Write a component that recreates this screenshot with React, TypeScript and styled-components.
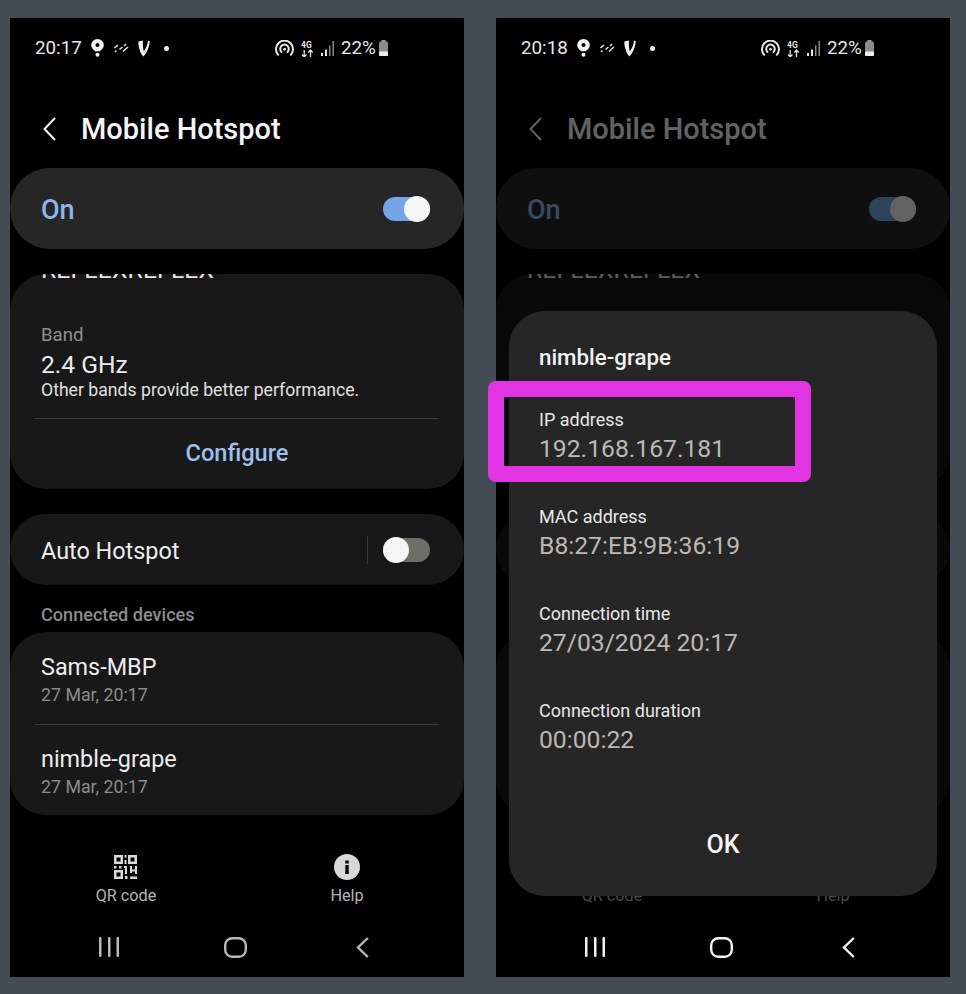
import React from "react"
import styled, { createGlobalStyle } from "styled-components"

const GlobalStyle = createGlobalStyle`
  html, body {
    margin: 0;
    padding: 0;
    background: #434c54;
  }
  * {
    box-sizing: border-box;
  }
`

const Page = styled.div`
  width: 966px;
  height: 994px;
  padding: 18px 16px 17px 10px;
  display: flex;
  gap: 32px;
  background: #434c54;
  font-family: Roboto, "Liberation Sans", sans-serif;
`

const PhoneFrame = styled.div`
  position: relative;
  width: 454px;
  height: 959px;
  background: #000;
  display: flex;
  flex-direction: column;
`

const StatusBar = styled.div`
  height: 60px;
  padding-left: 25px;
  display: flex;
  align-items: center;
  color: #e8e8e8;
  font-size: 18.8px;
`

const StatusLeft = styled.div`
  width: 240px;
  display: flex;
  align-items: center;
  gap: 9.5px;
`

const StatusRight = styled.div`
  display: flex;
  align-items: center;
  gap: 7px;
`

const Percent = styled.span`
  margin-right: -4px;
`

const Dot = styled.div`
  width: 5px;
  height: 5px;
  margin-left: 4px;
  border-radius: 50%;
  background: #f0f0f0;
`

const Screen = styled.div<{ $dimmed?: boolean }>`
  flex: 1;
  display: flex;
  flex-direction: column;
  opacity: ${(p) => (p.$dimmed ? 0.4 : 1)};
`

const Header = styled.div`
  height: 90px;
  padding: 12px 0 0 33px;
  display: flex;
  align-items: center;
  gap: 25px;
  color: #f4f4f4;
`

const Title = styled.h1`
  margin: 0;
  font-size: 29px;
  font-weight: 500;
  color: #f4f4f4;
`

const SwitchCard = styled.div`
  height: 81px;
  padding: 0 34px 0 31px;
  border-radius: 40px;
  background: #262626;
  display: flex;
  align-items: center;
  justify-content: space-between;
`

const OnLabel = styled.span`
  padding-top: 2px;
  font-size: 27px;
  font-weight: 500;
  color: #8eb6ea;
`

const Track = styled.div<{ $on?: boolean }>`
  position: relative;
  width: 47px;
  height: 24px;
  border-radius: 12px;
  background: ${(p) => (p.$on ? "#76a5e6" : "#6e6e68")};
`

const Knob = styled.div<{ $on?: boolean }>`
  position: absolute;
  top: -1px;
  ${(p) => (p.$on ? "right: 0;" : "left: 0;")}
  width: 26px;
  height: 26px;
  border-radius: 50%;
  background: #f6f6f6;
`

const List = styled.div`
  flex: 1;
  margin-top: 25px;
  display: flex;
  flex-direction: column;
  gap: 25px;
  overflow: hidden;
`

const Card = styled.div<{ $height: number }>`
  height: ${(p) => p.$height}px;
  border-radius: 36px;
  background: #181818;
  overflow: hidden;
  flex: none;
`

const ClippedName = styled.div`
  margin: -15px 0 0 31px;
  height: 21px;
  font-size: 24.6px;
  line-height: 22px;
  letter-spacing: 0.2px;
  color: #e6e6e6;
`

const BandBlock = styled.div`
  height: 138px;
  padding: 43px 31px 0;
`

const SmallLabel = styled.div`
  font-size: 18.6px;
  line-height: 24px;
  color: #8f8f8f;
`

const BandValue = styled.div`
  margin-top: 4px;
  font-size: 24.6px;
  line-height: 28px;
  color: #ededed;
`

const BandNote = styled.div`
  font-size: 17.65px;
  line-height: 22px;
  color: #e0e0e0;
`

const Divider = styled.div`
  height: 1px;
  margin: 0 25px;
  background: #3a3a3a;
`

const ConfigureRow = styled.div`
  height: 70px;
  padding-bottom: 2px;
  display: flex;
  align-items: center;
  justify-content: center;
  font-size: 23.6px;
  font-weight: 500;
  color: #9dc0ee;
`

const AutoRow = styled.div`
  height: 100%;
  padding: 0 34px 0 31px;
  display: flex;
  align-items: center;
  font-size: 23.4px;
  color: #ededed;
`

const AutoLabel = styled.span`
  flex: 1;
  padding-top: 2px;
`

const VBar = styled.div`
  width: 1px;
  height: 28px;
  margin-right: 15px;
  background: #3a3a3a;
`

const SectionLabel = styled.div`
  margin: -7px 0 -20px 31px;
  font-size: 18.1px;
  line-height: 24px;
  font-weight: 500;
  color: #8c8c8c;
`

const DeviceRow = styled.div<{ $top: number }>`
  height: 92px;
  padding: ${(p) => p.$top}px 31px 0;
`

const DeviceName = styled.div`
  font-size: 23.4px;
  line-height: 32px;
  color: #ededed;
`

const DeviceDate = styled.div`
  font-size: 17.8px;
  line-height: 24px;
  color: #8c8c8c;
`

const BottomActions = styled.div`
  height: 65px;
  margin-top: 39px;
  display: flex;
`

const Action = styled.div<{ $width: number }>`
  width: ${(p) => p.$width}px;
  display: flex;
  flex-direction: column;
  align-items: center;
  gap: 6px;
  font-size: 16.2px;
  line-height: 20px;
  color: #b4b4b4;
`

const ActionIcon = styled.div`
  height: 26px;
  display: flex;
  align-items: center;
`

const NavBar = styled.div<{ $color: string }>`
  height: 58px;
  padding-bottom: 2px;
  display: flex;
  align-items: center;
  color: ${(p) => p.$color};
`

const NavSlot = styled.div<{ $width: number }>`
  width: ${(p) => p.$width}px;
  display: flex;
  justify-content: center;
`

const Dialog = styled.div`
  position: absolute;
  left: 13px;
  top: 293px;
  width: 428px;
  height: 585px;
  padding: 31px 30px 0;
  border-radius: 36px;
  background: #262626;
  display: flex;
  flex-direction: column;
`

const DialogTitle = styled.div`
  flex: none;
  margin-bottom: 36px;
  font-size: 22.3px;
  line-height: 30px;
  font-weight: 500;
  color: #f2f2f2;
`

const InfoBlock = styled.div`
  flex: none;
  height: 97px;
`

const InfoLabel = styled.div`
  font-size: 18px;
  line-height: 24px;
  color: #e8e8e8;
`

const InfoValue = styled.div`
  font-size: 24.7px;
  line-height: 34px;
  color: #bdb9b2;
`

const OkButton = styled.div`
  flex: none;
  margin-top: -4px;
  height: 104px;
  display: flex;
  align-items: center;
  justify-content: center;
  font-size: 25px;
  font-weight: 500;
  color: #f4f4f4;
`

const Highlight = styled.div`
  position: absolute;
  left: -8px;
  top: 363px;
  width: 323px;
  height: 101px;
  border: 16px solid #e135e3;
  border-radius: 8px;
  pointer-events: none;
`

const BackIcon = () => (
  <svg width="13" height="24" viewBox="0 0 13 24" fill="none" stroke="currentColor" strokeWidth="2">
    <path d="M12 1 1.500 12 12 23" />
  </svg>
)

const LocationIcon = () => (
  <svg width="13" height="18" viewBox="0 0 13 18" fill="#f2f2f2">
    <path d="M6.500 0a6.300 6.300 0 0 1 6.300 6.300c0 2.900-2.800 4.900-4 5.900H4.200C3 11.200.2 9.200.2 6.300A6.300 6.300 0 0 1 6.500 0Z" />
    <circle cx="6.500" cy="6" r="2" fill="#000" />
    <circle cx="6.500" cy="15.800" r="2" />
  </svg>
)

const WavesIcon = () => (
  <svg width="15" height="10" viewBox="0 0 15 10" fill="none" stroke="#dcdcdc" strokeWidth="1.600">
    <path d="M0.500 5 4 2M1 9l1.500-1.300M5.500 6.500 8.500 4M10 3l2-1.800M9 8.500l5-4.500" />
  </svg>
)

const VIcon = () => (
  <svg width="12" height="17" viewBox="0 0 12 17" fill="#f0f0f0">
    <path d="M0.300 1.500 5 0.500C4.700 5 5 9 5.900 11.500 8 8.500 9.500 5 10 0.800L11.800 1C11.400 7 8.800 13 5.500 16.500 2.300 13.500 0.300 7 0.300 1.500Z" />
  </svg>
)

const HotspotIcon = () => (
  <svg width="19" height="16" viewBox="0 0 19 16" fill="none" stroke="#e8e8e8" strokeWidth="2" strokeLinecap="round">
    <path d="M3.200 14.800a8.500 8.500 0 1 1 12.600 0" />
    <path d="M6.500 12a4.300 4.300 0 1 1 6 0" />
    <circle cx="9.500" cy="9.300" r="1.400" fill="#e8e8e8" stroke="none" />
  </svg>
)

const NetworkIcon = () => (
  <svg width="13" height="17" viewBox="0 0 13 17" fill="none" stroke="#e0e0e0" strokeWidth="1.300">
    <text x="0" y="7.500" fontSize="8.500" fontWeight="700" fontFamily="Roboto, sans-serif" fill="#e0e0e0" stroke="none">
      4G
    </text>
    <path d="M3.200 10v7M1 14.500 3.200 17l2.200-2.500M9.500 17v-7M7.300 12.500 9.500 10l2.200 2.500" />
  </svg>
)

const SignalIcon = () => (
  <svg width="13" height="15" viewBox="0 0 13 15" fill="#8a8a8a">
    <rect x="0" y="12" width="2" height="3" fill="#e6e6e6" />
    <rect x="4" y="8.500" width="2" height="6.500" fill="#e6e6e6" />
    <rect x="8" y="4.500" width="1.500" height="10.500" />
    <rect x="11.500" y="0" width="1.500" height="15" />
  </svg>
)

const BatteryIcon = () => (
  <svg width="9" height="16" viewBox="0 0 9 16">
    <rect x="2.500" y="0" width="4" height="2" fill="#9a9a9a" />
    <rect x="0" y="1.500" width="9" height="14.500" rx="1.500" fill="#8c8c8c" />
    <rect x="0" y="11.500" width="9" height="4.500" rx="1" fill="#ececec" />
  </svg>
)

const QrIcon = () => (
  <svg width="24" height="24" viewBox="0 0 24 24" fill="#d8d8d8">
    <path fillRule="evenodd" d="M0 0h9v9H0ZM2.500 2.500v4h4v-4ZM14 0h9v9h-9ZM16.500 2.500v4h4v-4ZM0 15h9v9H0ZM2.500 17.500v4h4v-4Z" />
    <rect x="10.500" y="0" width="2" height="2.500" />
    <rect x="10.500" y="5" width="2" height="4" />
    <rect x="0" y="11" width="2.500" height="2.500" />
    <rect x="5" y="11" width="2.500" height="2.500" />
    <rect x="10" y="11" width="2.500" height="2" />
    <rect x="11" y="11" width="2" height="8" />
    <rect x="16" y="11" width="2" height="7" />
    <rect x="21" y="11" width="2" height="8" />
    <rect x="16" y="14.500" width="7" height="2" />
    <rect x="11" y="21" width="2.500" height="3" />
    <rect x="16" y="21.500" width="7" height="2.500" />
  </svg>
)

const InfoIcon = () => (
  <svg width="26" height="26" viewBox="0 0 26 26">
    <circle cx="13" cy="13" r="13" fill="#d8d8d8" />
    <rect x="11.300" y="11" width="3.400" height="9" fill="#000" />
    <rect x="11.300" y="6.500" width="3.400" height="3" fill="#000" />
  </svg>
)

const RecentIcon = () => (
  <svg width="20" height="20" viewBox="0 0 20 20" fill="currentColor">
    <rect x="0" y="0" width="2.500" height="20" rx="1" />
    <rect x="9" y="0" width="2.500" height="20" rx="1" />
    <rect x="17.500" y="0" width="2.500" height="20" rx="1" />
  </svg>
)

const HomeIcon = () => (
  <svg width="23" height="21" viewBox="0 0 23 21" fill="none" stroke="currentColor" strokeWidth="2.400">
    <rect x="1.200" y="1.200" width="20.600" height="18.600" rx="7" />
  </svg>
)

const NavBackIcon = () => (
  <svg width="13" height="21" viewBox="0 0 13 21" fill="none" stroke="currentColor" strokeWidth="2.400">
    <path d="M11.800 1 2 10.500 11.800 20" />
  </svg>
)

const HotspotScreen = ({ dimmed }: { dimmed?: boolean }) => (
  <Screen $dimmed={dimmed}>
    <Header>
      <BackIcon />
      <Title>Mobile Hotspot</Title>
    </Header>
    <SwitchCard>
      <OnLabel>On</OnLabel>
      <Track $on>
        <Knob $on />
      </Track>
    </SwitchCard>
    <List>
      <Card $height={215}>
        <ClippedName>REFLEXREFLEX</ClippedName>
        <BandBlock>
          <SmallLabel>Band</SmallLabel>
          <BandValue>2.4 GHz</BandValue>
          <BandNote>Other bands provide better performance.</BandNote>
        </BandBlock>
        <Divider />
        <ConfigureRow>Configure</ConfigureRow>
      </Card>
      <Card $height={71}>
        <AutoRow>
          <AutoLabel>Auto Hotspot</AutoLabel>
          <VBar />
          <Track>
            <Knob />
          </Track>
        </AutoRow>
      </Card>
      <SectionLabel>Connected devices</SectionLabel>
      <Card $height={183}>
        <DeviceRow $top={19}>
          <DeviceName>Sams-MBP</DeviceName>
          <DeviceDate>27 Mar, 20:17</DeviceDate>
        </DeviceRow>
        <Divider />
        <DeviceRow $top={18}>
          <DeviceName>nimble-grape</DeviceName>
          <DeviceDate>27 Mar, 20:17</DeviceDate>
        </DeviceRow>
      </Card>
    </List>
    <BottomActions>
      <Action $width={232}>
        <ActionIcon>
          <QrIcon />
        </ActionIcon>
        QR code
      </Action>
      <Action $width={210}>
        <ActionIcon>
          <InfoIcon />
        </ActionIcon>
        Help
      </Action>
    </BottomActions>
  </Screen>
)

const Phone = ({ time, navColor, children }: { time: string; navColor: string; children: React.ReactNode }) => (
  <PhoneFrame>
    <StatusBar>
      <StatusLeft>
        {time}
        <LocationIcon />
        <WavesIcon />
        <VIcon />
        <Dot />
      </StatusLeft>
      <StatusRight>
        <HotspotIcon />
        <NetworkIcon />
        <SignalIcon />
        <Percent>22%</Percent>
        <BatteryIcon />
      </StatusRight>
    </StatusBar>
    {children}
    <NavBar $color={navColor}>
      <NavSlot $width={198}>
        <RecentIcon />
      </NavSlot>
      <NavSlot $width={54}>
        <HomeIcon />
      </NavSlot>
      <NavSlot $width={200}>
        <NavBackIcon />
      </NavSlot>
    </NavBar>
  </PhoneFrame>
)

const infoRows = [
  { label: "IP address", value: "192.168.167.181" },
  { label: "MAC address", value: "B8:27:EB:9B:36:19" },
  { label: "Connection time", value: "27/03/2024 20:17" },
  { label: "Connection duration", value: "00:00:22" },
]

export default function App() {
  return (
    <Page>
      <GlobalStyle />
      <Phone time="20:17" navColor="#b8b8b8">
        <HotspotScreen />
      </Phone>
      <Phone time="20:18" navColor="#f4f4f4">
        <HotspotScreen dimmed />
        <Dialog>
          <DialogTitle>nimble-grape</DialogTitle>
          {infoRows.map((row) => (
            <InfoBlock key={row.label}>
              <InfoLabel>{row.label}</InfoLabel>
              <InfoValue>{row.value}</InfoValue>
            </InfoBlock>
          ))}
          <OkButton>OK</OkButton>
        </Dialog>
        <Highlight />
      </Phone>
    </Page>
  )
}
